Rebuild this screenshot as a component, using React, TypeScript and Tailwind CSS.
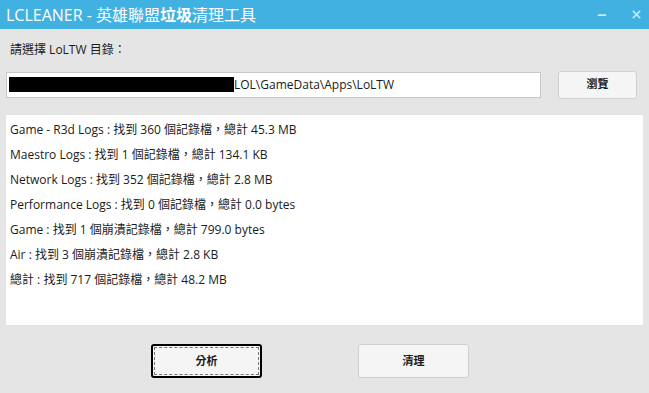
import { Minus, X } from 'lucide-react'

const lines = [
  'Game - R3d Logs : 找到 360 個記錄檔，總計 45.3 MB',
  'Maestro Logs : 找到 1 個記錄檔，總計 134.1 KB',
  'Network Logs : 找到 352 個記錄檔，總計 2.8 MB',
  'Performance Logs : 找到 0 個記錄檔，總計 0.0 bytes',
  'Game : 找到 1 個崩潰記錄檔，總計 799.0 bytes',
  'Air : 找到 3 個崩潰記錄檔，總計 2.8 KB',
  '總計 : 找到 717 個記錄檔，總計 48.2 MB',
]

const font = "font-['Segoe_UI','Open_Sans','Noto_Sans_CJK_TC',sans-serif]"

export default function App() {
  return (
    <div className={`w-[649px] h-[393px] bg-[#e5e5e5] flex flex-col text-[#1b1b1b] ${font}`}>
      {/* title bar */}
      <div className="h-[29px] bg-[#41b1e1] flex items-center justify-between pl-[6px] pr-[6px] shrink-0">
        <span className="text-[16px] text-white leading-none">
          LCLEANER - 英雄聯盟<span className="font-bold">垃圾</span>清理工具
        </span>
        <div className="flex items-center gap-[22px] text-[#c9ecfb]">
          <Minus className="w-[12px] h-[12px]" strokeWidth={3.5} />
          <X className="w-[13px] h-[13px]" strokeWidth={3} />
        </div>
      </div>

      <div className="px-[6px] flex flex-col">
        <p className="mt-[13px] ml-[4px] text-[12px] leading-[16px]">請選擇 LoLTW 目錄：</p>

        <div className="mt-[12px] flex items-center h-[29px]">
          <div className="w-[535px] h-[26px] bg-white border border-[#c8c8c8] flex items-center text-[12px] pl-[2px]">
            <span className="w-[225px] h-[15px] bg-black inline-block" />
            <span>LOL\GameData\Apps\LoLTW</span>
          </div>
          <button className="ml-[17px] w-[79px] h-[28px] rounded-[3px] bg-[#f5f5f5] border border-[#d0d0d0] text-[11px] font-bold">
            瀏覽
          </button>
        </div>

        <div className="mt-[16px] w-[637px] h-[210px] bg-white pt-[2px] pl-[4px]">
          {lines.map((l) => (
            <p key={l} className="text-[12px] leading-[25px]">{l}</p>
          ))}
        </div>

        <div className="mt-[19px] flex gap-[96px] pl-[145px]">
          <button className="w-[111px] h-[34px] rounded-[3px] bg-[#f5f5f5] border-2 border-black p-[1px] text-[11px] font-bold">
            <span className="w-full h-full flex items-center justify-center border border-dashed border-[#777]">分析</span>
          </button>
          <button className="w-[111px] h-[34px] rounded-[3px] bg-[#f5f5f5] border border-[#cfcfcf] text-[11px] font-bold">
            清理
          </button>
        </div>
      </div>
    </div>
  )
}
